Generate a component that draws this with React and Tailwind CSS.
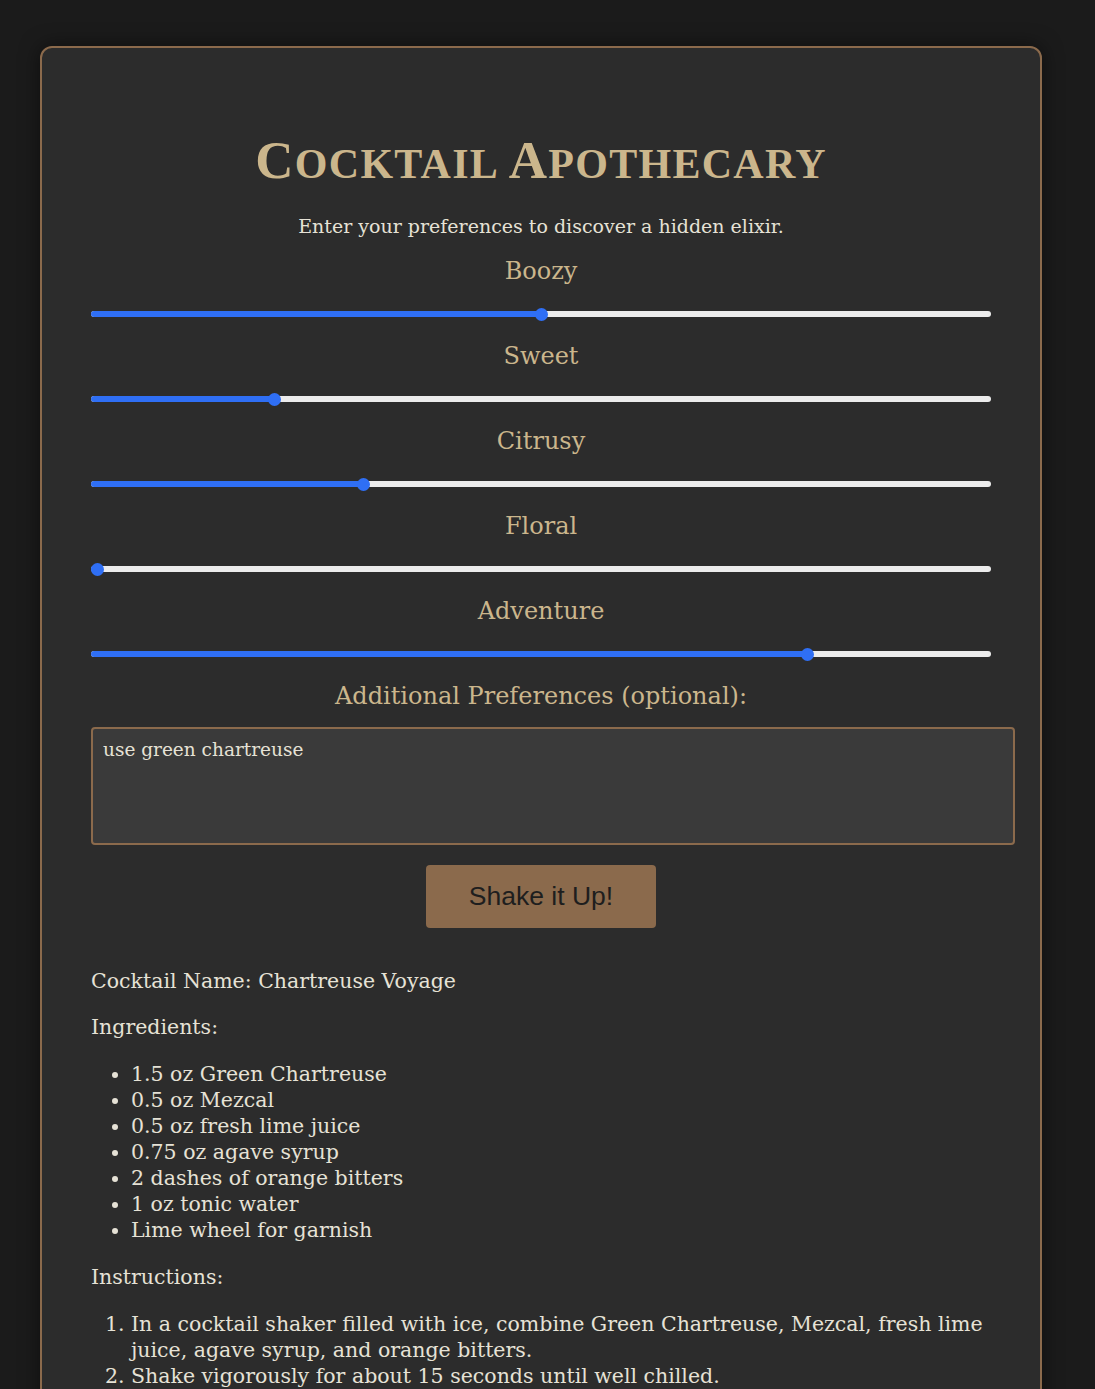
const SLIDERS = [
  { label: 'Boozy', value: 50 },
  { label: 'Sweet', value: 20 },
  { label: 'Citrusy', value: 30 },
  { label: 'Floral', value: 0 },
  { label: 'Adventure', value: 80 },
]

const INGREDIENTS = [
  '1.5 oz Green Chartreuse',
  '0.5 oz Mezcal',
  '0.5 oz fresh lime juice',
  '0.75 oz agave syrup',
  '2 dashes of orange bitters',
  '1 oz tonic water',
  'Lime wheel for garnish',
]

const STEPS = [
  'In a cocktail shaker filled with ice, combine Green Chartreuse, Mezcal, fresh lime juice, agave syrup, and orange bitters.',
  'Shake vigorously for about 15 seconds until well chilled.',
  'Strain into a highball glass filled with fresh ice.',
]

function Slider({ value }) {
  return (
    <div className="relative h-[14px] w-[900px]">
      <div className="absolute left-0 right-0 top-[4px] h-[6px] rounded-full bg-[#ececec]" />
      <div
        className="absolute left-0 top-[4px] h-[6px] rounded-full bg-[#2f6ff5]"
        style={{ width: `calc(6.5px + (100% - 13px) * ${value / 100})` }}
      />
      <div
        className="absolute top-[0.5px] h-[13px] w-[13px] rounded-full bg-[#2f6ff5]"
        style={{ left: `calc((100% - 13px) * ${value / 100})` }}
      />
    </div>
  )
}

export default function App() {
  return (
    <div className="min-h-[1389px] bg-[#1b1b1b] pt-[46px] font-['DejaVu_Serif',serif]">
      <div className="ml-[40px] w-[1002px] rounded-[12px] border-2 border-[#8b6a4c] bg-[#2c2c2c] px-[49px] pt-[49px] pb-[40px] shadow-[0_0_20px_rgba(0,0,0,0.5)]">
        {/* header */}
        <h1 className="mt-[33px] h-[60px] text-center leading-[60px] font-bold tracking-[1.3px] text-[#cbb68c] font-['Liberation_Serif',serif]">
          <span className="text-[53px]">C</span>
          <span className="text-[42px]">OCKTAIL </span>
          <span className="text-[53px]">A</span>
          <span className="text-[42px]">POTHECARY</span>
        </h1>
        <p className="mt-[23px] text-center text-[19px] leading-[26px] text-[#e6e2d6]">
          Enter your preferences to discover a hidden elixir.
        </p>

        {/* sliders */}
        <div className="mt-[17px]">
          {SLIDERS.map(s => (
            <div key={s.label} className="pb-[20px]">
              <div className="text-center text-[24px] leading-[30px] text-[#cbb68c]">{s.label}</div>
              <div className="mt-[21px]">
                <Slider value={s.value} />
              </div>
            </div>
          ))}
        </div>

        <div className="text-center text-[24px] leading-[30px] text-[#cbb68c]">
          Additional Preferences (optional):
        </div>
        <div className="mt-[16px] h-[118px] w-[924px] rounded-[4px] border-2 border-[#8b6a4c] bg-[#3a3a3a] px-[10px] py-[9px] text-[18.5px] leading-[24px] text-[#e6e2d6]">
          use green chartreuse
        </div>

        <div className="mt-[20px] flex justify-center">
          <button className="h-[63px] w-[230px] rounded-[4px] bg-[#8b6a4c] text-[26.5px] text-[#1e1e1e] font-['Liberation_Sans',sans-serif]">
            Shake it Up!
          </button>
        </div>

        {/* result */}
        <div className="mt-[40px] text-[20.5px] leading-[26px] text-[#e6e2d6]">
          <p>Cocktail Name: Chartreuse Voyage</p>
          <p className="mt-[20px]">Ingredients:</p>
          <ul className="mt-[21px] list-disc pl-[40px]">
            {INGREDIENTS.map(i => (
              <li key={i}>{i}</li>
            ))}
          </ul>
          <p className="mt-[21px]">Instructions:</p>
          <ol className="mt-[21px] list-decimal pl-[40px]">
            {STEPS.map(s => (
              <li key={s}>{s}</li>
            ))}
          </ol>
        </div>
      </div>
    </div>
  )
}
